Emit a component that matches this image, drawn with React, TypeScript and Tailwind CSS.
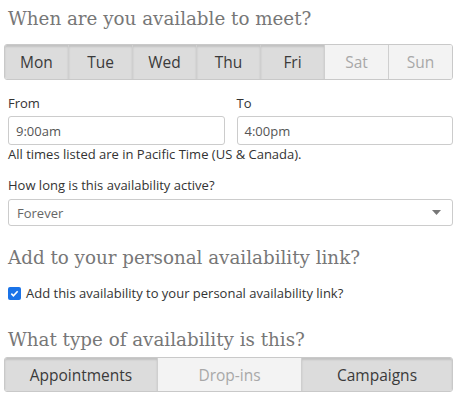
const days = [
  { label: "Mon", on: true },
  { label: "Tue", on: true },
  { label: "Wed", on: true },
  { label: "Thu", on: true },
  { label: "Fri", on: true },
  { label: "Sat", on: false },
  { label: "Sun", on: false },
];

const types = [
  { label: "Appointments", on: true, w: "w-[153px]" },
  { label: "Drop-ins", on: false, w: "w-[144px]" },
  { label: "Campaigns", on: true, w: "flex-1" },
];

function Heading({ children }: { children: React.ReactNode }) {
  return (
    <h2 className="px-2 font-['DejaVu_Serif',serif] text-[18.3px] leading-[24px] text-[#777]">
      {children}
    </h2>
  );
}

function Toggle({ label, on, className }: { label: string; on: boolean; className: string }) {
  return (
    <button
      className={
        "flex items-center justify-center border-r border-[#cfcfcf] last:border-r-0 text-[15.5px] " +
        (on
          ? "bg-[#dcdcdc] text-[#3a3a3a] shadow-[inset_0_2px_2px_rgba(0,0,0,0.12)] "
          : "bg-[#f3f3f3] text-[#a8a8a8] ") +
        className
      }
    >
      {label}
    </button>
  );
}

export default function App() {
  return (
    <div className="w-[471px] h-[408px] bg-white font-['Open_Sans',sans-serif] text-[13px] leading-[18px] text-[#333] pt-[7px]">
      <Heading>When are you available to meet?</Heading>

      <div className="mx-1 mt-[13px] flex h-[36px] w-[449px] overflow-hidden rounded-[3px] border border-[#c9c9c9]">
        {days.map((d) => (
          <Toggle key={d.label} label={d.label} on={d.on} className="flex-1" />
        ))}
      </div>

      <div className="mt-[14px] grid grid-cols-2 gap-3 px-2 pr-[18px]">
        <div>
          <label className="block">From</label>
          <div className="mt-[4px] flex h-[29px] items-center rounded-[3px] border border-[#ccc] px-[7px] text-[#555]">
            9:00am
          </div>
        </div>
        <div>
          <label className="block">To</label>
          <div className="mt-[4px] flex h-[29px] items-center rounded-[3px] border border-[#ccc] px-[7px] text-[#555]">
            4:00pm
          </div>
        </div>
      </div>
      <p className="px-2">All times listed are in Pacific Time (US &amp; Canada).</p>

      <label className="mt-[13px] block px-2">How long is this availability active?</label>
      <div className="mx-2 mt-[5px] flex h-[27px] w-[445px] items-center justify-between rounded-[3px] border border-[#ccc] px-[8px] text-[#666]">
        <span>Forever</span>
        <svg width="9" height="5" viewBox="0 0 9 5" className="mr-[3px]">
          <path d="M0 0h9L4.5 5z" fill="#777" />
        </svg>
      </div>

      <div className="mt-[20px]">
        <Heading>Add to your personal availability link?</Heading>
      </div>
      <label className="mt-[14px] flex items-center gap-[5px] px-2">
        <span className="flex h-[13px] w-[13px] items-center justify-center rounded-[2px] bg-[#1a73e8]">
          <svg width="9" height="9" viewBox="0 0 10 10">
            <path d="M1.5 5.2l2.3 2.3L8.5 2.5" stroke="#fff" strokeWidth="1.8" fill="none" />
          </svg>
        </span>
        Add this availability to your personal availability link?
      </label>

      <div className="mt-[26px]">
        <Heading>What type of availability is this?</Heading>
      </div>
      <div className="mx-1 mt-[5px] flex h-[35px] w-[449px] overflow-hidden rounded-[3px] border border-[#c9c9c9]">
        {types.map((t) => (
          <Toggle key={t.label} label={t.label} on={t.on} className={t.w} />
        ))}
      </div>
    </div>
  );
}
